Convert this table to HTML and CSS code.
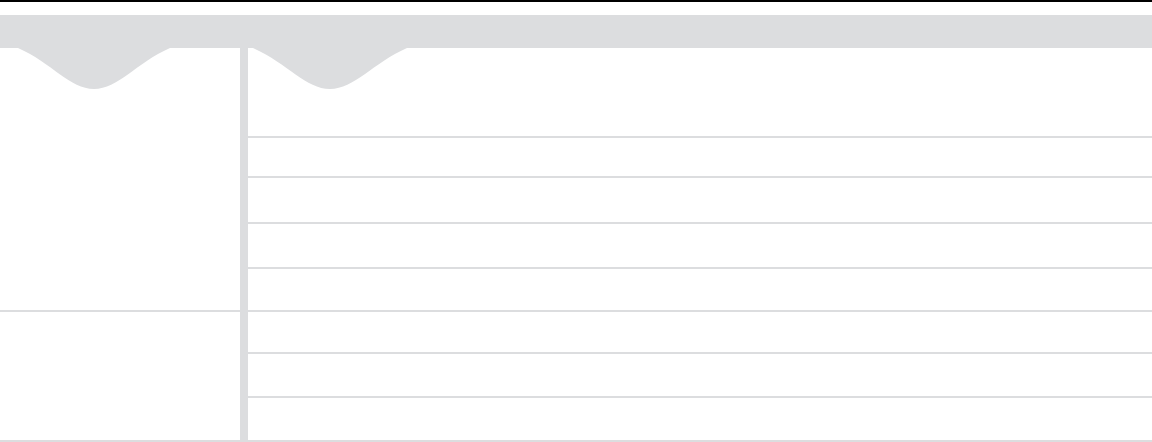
FILE: index.html
```html
<!DOCTYPE html>
<html>
<head>
<meta charset="utf-8">
<link rel="stylesheet" href="styles.css">
</head>
<body>
<div class="topline"></div>
<div class="band"></div>
<div class="grid">
  <div class="left">
    <div class="lsec lsec1">
      <svg class="wave wave-l" width="152" height="41" viewBox="0 0 152 41"><path d="M0 0 C34 15 52 41 76 41 C100 41 118 15 152 0 Z" fill="#dcdddf"/></svg>
    </div>
    <div class="lsec lsec2"></div>
  </div>
  <div class="bar"></div>
  <div class="right">
    <div class="row r1">
      <svg class="wave wave-r" width="154" height="41" viewBox="0 0 154 41"><path d="M0 0 C34 15 53 41 77 41 C101 41 120 15 154 0 Z" fill="#dcdddf"/></svg>
    </div>
    <div class="row r2"></div>
    <div class="row r3"></div>
    <div class="row r4"></div>
    <div class="row r5"></div>
    <div class="row r6"></div>
    <div class="row r7"></div>
    <div class="row r8"></div>
  </div>
</div>
</body>
</html>
```
FILE: styles.css
```css
html, body {
  margin: 0;
  padding: 0;
  background: #ffffff;
  font-family: "Liberation Sans", Arial, sans-serif;
}
.topline {
  height: 2px;
  background: #000000;
}
.band {
  margin-top: 13px;
  height: 33px;
  background: #dcdddf;
}
.grid {
  display: flex;
  align-items: stretch;
}
.left {
  width: 240px;
  display: flex;
  flex-direction: column;
}
.lsec {
  border-bottom: 2px solid #dcdddf;
}
.lsec1 { height: 262px; }
.lsec2 { height: 128px; }
.bar {
  width: 8px;
  background: #dcdddf;
}
.right {
  flex: 1;
  display: flex;
  flex-direction: column;
}
.row {
  border-bottom: 2px solid #dcdddf;
}
.r1 { height: 88px; }
.r2 { height: 38px; }
.r3 { height: 44px; }
.r4 { height: 43px; }
.r5 { height: 41px; }
.r6 { height: 40px; }
.r7 { height: 42px; }
.r8 { height: 42px; }
.wave {
  display: block;
}
.wave-l { margin-left: 18px; }
.wave-r { margin-left: 5px; }
```
